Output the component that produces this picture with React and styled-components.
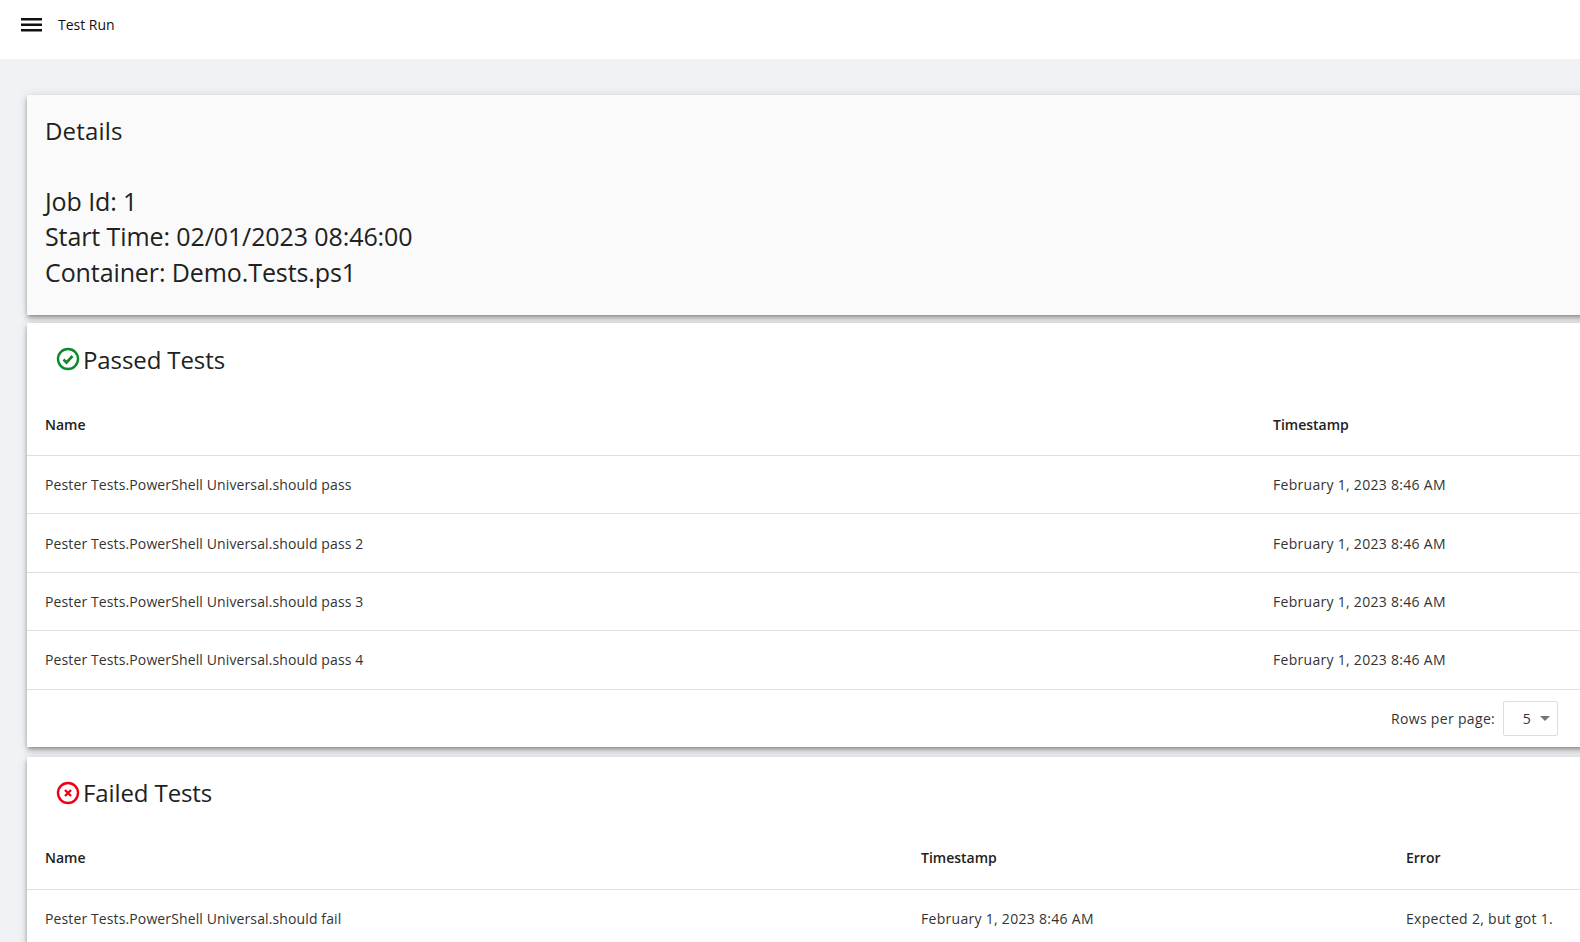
import React from "react";
import styled, { createGlobalStyle } from "styled-components";

const GlobalStyle = createGlobalStyle`
    html, body {
        margin: 0;
        padding: 0;
        height: 100%;
        overflow: hidden;
        background: #f0f2f5;
        font-family: "Open Sans", "Noto Sans", sans-serif;
        color: #212121;
    }
`

const AppBar = styled.header`
    display: flex;
    align-items: center;
    height: 59px;
    padding: 0 0 10px 21px;
    box-sizing: border-box;
    background: #fff;
    color: #111;
`

const MenuIcon = styled.svg`
    width: 21px;
    height: 14px;
    margin-right: 16px;
`

const AppTitle = styled.span`
    font-size: 14px;
`

const Content = styled.main`
    display: flex;
    flex-direction: column;
    width: 1640px;
    padding: 36px 0 0 27px;
`

const Card = styled.section`
    margin-bottom: ${(props) => props.$gap || 8}px;
    background: ${(props) => props.$bg || "#fff"};
    box-shadow: 0 2px 4px -1px rgba(0,0,0,.3), 0 4px 5px 0 rgba(0,0,0,.16), 0 1px 10px 0 rgba(0,0,0,.12);
`

const DetailsCard = styled(Card)`
    height: 220px;
    padding: 18px 18px 0;
    box-sizing: border-box;
`

const DetailsTitle = styled.h2`
    margin: 0 0 36px;
    font-size: 24px;
    font-weight: 400;
    line-height: 35px;
    letter-spacing: 0.2px;
`

const DetailsLine = styled.div`
    font-size: 25px;
    line-height: 35.3px;
    letter-spacing: -0.1px;
`

const CardTitle = styled.h2`
    display: flex;
    align-items: center;
    height: 72px;
    margin: 0;
    padding-left: 29px;
    font-size: 24px;
    font-weight: 400;
    letter-spacing: -0.1px;
`

const StatusIcon = styled.svg`
    width: 24px;
    height: 24px;
    margin-right: 3px;
`

const Table = styled.table`
    table-layout: fixed;
    width: 100%;
    border-collapse: collapse;
`

const HeadCell = styled.th`
    height: 58px;
    padding: 0 18px 2px;
    text-align: left;
    font-size: 14px;
    font-weight: 600;
    border-bottom: 1px solid #e0e0e0;
`

const Cell = styled.td`
    height: 57.4px;
    padding: 0 18px;
    font-size: 14px;
    letter-spacing: ${(props) => (props.$wide ? "0.29px" : "0.12px")};
    color: #333;
    border-bottom: 1px solid #e0e0e0;
`

const Pager = styled.div`
    display: flex;
    align-items: center;
    height: 57px;
    padding-left: 1364px;
    font-size: 14px;
    letter-spacing: 0.33px;
    color: #333;
`

const RowsSelect = styled.div`
    display: flex;
    align-items: center;
    justify-content: flex-end;
    gap: 9px;
    width: 55px;
    height: 35px;
    margin-left: 8px;
    padding-right: 7px;
    box-sizing: border-box;
    background: #fff;
    border: 1px solid #ddd;
    border-radius: 2px;
`

const Caret = styled.span`
    width: 0;
    height: 0;
    border-left: 5.5px solid transparent;
    border-right: 5.5px solid transparent;
    border-top: 5.5px solid #757575;
`

const passed = ["", " 2", " 3", " 4"]

function CheckIcon() {
    return (
        <StatusIcon viewBox="0 0 24 24" fill="none" stroke="#0a8a2a" strokeWidth="2.4">
            <circle cx="12" cy="12" r="10" />
            <path d="M7.5 12.5l3 3 6-6.5" strokeWidth="2.6" />
        </StatusIcon>
    )
}

function CrossIcon() {
    return (
        <StatusIcon viewBox="0 0 24 24" fill="none" stroke="#f00014" strokeWidth="2.4">
            <circle cx="12" cy="12" r="10" />
            <path d="M9 9l6 6M15 9l-6 6" strokeWidth="2.4" />
        </StatusIcon>
    )
}

function App() {
    return (
        <>
            <GlobalStyle />
            <AppBar>
                <MenuIcon viewBox="0 0 21 14" fill="#111">
                    <rect y="0" width="21" height="2.5" />
                    <rect y="5.5" width="21" height="2.5" />
                    <rect y="11" width="21" height="2.5" />
                </MenuIcon>
                <AppTitle>Test Run</AppTitle>
            </AppBar>
            <Content>
                <DetailsCard $bg="#fafafa">
                    <DetailsTitle>Details</DetailsTitle>
                    <DetailsLine>Job Id: 1</DetailsLine>
                    <DetailsLine>Start Time: 02/01/2023 08:46:00</DetailsLine>
                    <DetailsLine>Container: Demo.Tests.ps1</DetailsLine>
                </DetailsCard>
                <Card $gap={10}>
                    <CardTitle><CheckIcon />Passed Tests</CardTitle>
                    <Table>
                        <colgroup>
                            <col style={{ width: 1228 }} />
                            <col />
                        </colgroup>
                        <thead>
                            <tr><HeadCell>Name</HeadCell><HeadCell>Timestamp</HeadCell></tr>
                        </thead>
                        <tbody>
                            {passed.map((suffix) => (
                                <tr key={suffix}>
                                    <Cell>Pester Tests.PowerShell Universal.should pass{suffix}</Cell>
                                    <Cell $wide>February 1, 2023 8:46 AM</Cell>
                                </tr>
                            ))}
                        </tbody>
                    </Table>
                    <Pager>
                        Rows per page:
                        <RowsSelect>5<Caret /></RowsSelect>
                    </Pager>
                </Card>
                <Card>
                    <CardTitle><CrossIcon />Failed Tests</CardTitle>
                    <Table>
                        <colgroup>
                            <col style={{ width: 876 }} />
                            <col style={{ width: 485 }} />
                            <col />
                        </colgroup>
                        <thead>
                            <tr><HeadCell>Name</HeadCell><HeadCell>Timestamp</HeadCell><HeadCell>Error</HeadCell></tr>
                        </thead>
                        <tbody>
                            <tr>
                                <Cell>Pester Tests.PowerShell Universal.should fail</Cell>
                                <Cell $wide>February 1, 2023 8:46 AM</Cell>
                                <Cell $wide>Expected 2, but got 1.</Cell>
                            </tr>
                        </tbody>
                    </Table>
                </Card>
            </Content>
        </>
    )
}

export default App;
